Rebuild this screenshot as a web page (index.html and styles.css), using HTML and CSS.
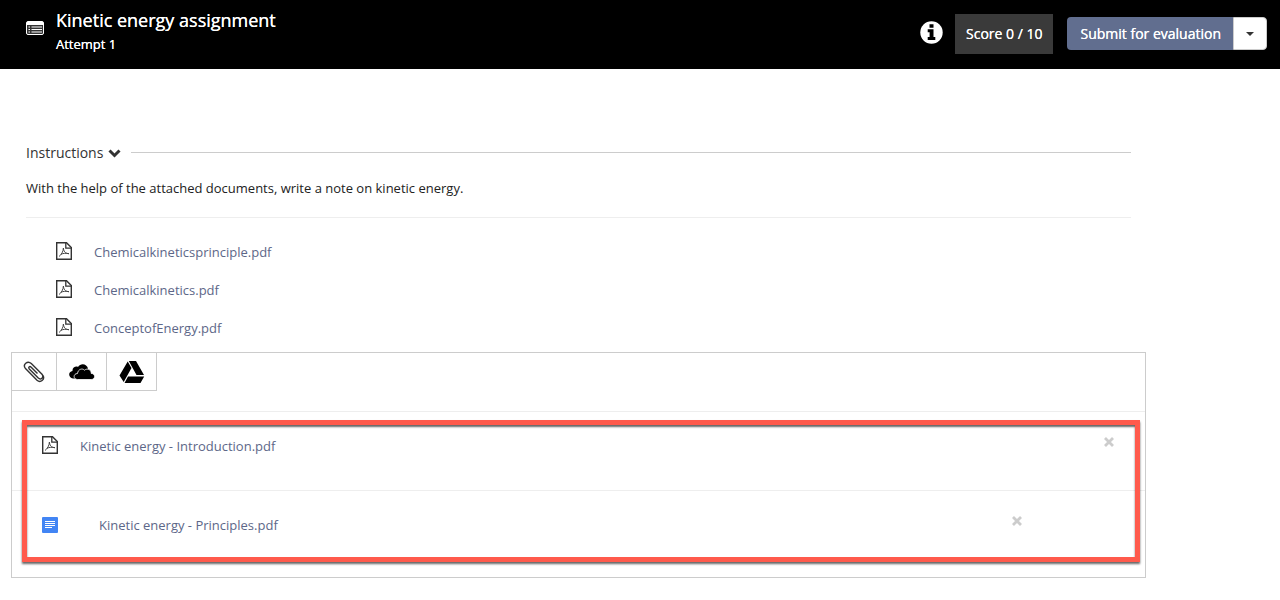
FILE: index.html
```html
<!DOCTYPE html>
<html lang="en">
<head>
    <meta charset="UTF-8">
    <meta name="viewport" content="width=device-width, initial-scale=1">
    <title>Kinetic energy assignment</title>
    <link rel="stylesheet" href="styles.css">
</head>
<body>

    <!-- Shared icon -->
    <svg class="sprite" aria-hidden="true">
        <symbol id="icon-pdf" viewBox="0 0 16 18">
            <path d="M.7.7h9.800l4.800 4.800v11.800H.7z" fill="none" stroke="#333" stroke-width="1.400"/>
            <path d="M9.800.7v5.500h5.500" fill="none" stroke="#333" stroke-width="1.300"/>
            <path d="M3 14.500C5.500 12.500 7.300 9.500 7.400 6c.2 3 1.600 5.500 5.600 5.700M5 12.300c2-1.100 5-1.300 8-.6" fill="none" stroke="#444" stroke-width="1"/>
        </symbol>
    </svg>

    <!-- Top Bar -->
    <header>
        <div class="heading">
            <svg class="list-icon" width="18" height="14" viewBox="0 0 18 14">
                <rect x=".5" y=".5" width="17" height="13" rx="1.500" fill="#333" stroke="#fff"/>
                <path d="M1 1h16v3H1z" fill="#fff"/>
                <path d="M2.500 6h1.500M2.500 8.500h1.500M2.500 11h1.500M5.500 6H16M5.500 8.500H16M5.500 11H16" stroke="#fff" stroke-width="1.200"/>
            </svg>
            <div>
                <h1>Kinetic energy assignment</h1>
                <p class="attempt">Attempt 1</p>
            </div>
        </div>
        <div class="actions">
            <button class="info-btn" aria-label="Information">
                <svg width="23" height="23" viewBox="0 0 23 23">
                    <circle cx="11.500" cy="11.500" r="11.200" fill="#fff"/>
                    <path d="M9.500 3.300h4v3.400h-4zM7.700 8.300h5.800v7.600h1.800v3H7.700v-3h1.900v-4.600H7.700z" fill="#000"/>
                </svg>
            </button>
            <span class="score">Score 0 / 10</span>
            <div class="btn-group">
                <button class="submit-btn">Submit for evaluation</button>
                <button class="caret-btn" aria-label="More options"><span class="caret"></span></button>
            </div>
        </div>
    </header>

    <main>
        <!-- Instructions -->
        <section class="instructions">
            <div class="section-title">
                <button class="toggle-btn">Instructions
                    <svg width="13" height="9" viewBox="0 0 13 9">
                        <path d="M1.500 1.500l5 5 5-5" fill="none" stroke="#333" stroke-width="3"/>
                    </svg>
                </button>
            </div>
            <p class="note">With the help of the attached documents, write a note on kinetic energy.</p>
            <ul class="documents">
                <li><svg class="pdf-icon"><use href="#icon-pdf"/></svg><a href="#">Chemicalkineticsprinciple.pdf</a></li>
                <li><svg class="pdf-icon"><use href="#icon-pdf"/></svg><a href="#">Chemicalkinetics.pdf</a></li>
                <li><svg class="pdf-icon"><use href="#icon-pdf"/></svg><a href="#">ConceptofEnergy.pdf</a></li>
            </ul>
        </section>

        <!-- Attachments -->
        <section class="panel">
            <div class="toolbar">
                <button class="tool clip" aria-label="Attach a file">
                    <svg width="22" height="22" viewBox="0 0 22 22">
                        <path d="M14.500 12.500L8.200 6.200C6.700 4.700 4.800 6.400 6.300 8L15.300 17C17.800 19.300 21.300 16.300 19 13.300L8.300 2.500C4.500-.8-.8 3.500 2.500 7.600L14 19.200C17.500 22.300 22.200 18.500 20 14.500" fill="none" stroke="#333" stroke-width="1.400"/>
                    </svg>
                </button>
                <button class="tool" aria-label="OneDrive">
                    <svg width="26" height="16" viewBox="0 0 26 16">
                        <path d="M4 14.500C-1 14-1 7.500 3.500 7 3 3.500 7 1.700 9 3c2.500-4.500 9-3.500 10 1.500l-2 5-9 5z" fill="#000"/>
                        <path d="M8.500 15.500c-4.500 0-4.500-6 0-6C9 5 13.500 4 15.500 6.200c3-2.500 7-.4 6.700 3.200 4.500.1 4.500 6.100 0 6.100z" fill="#000" stroke="#fff" stroke-width=".8"/>
                    </svg>
                </button>
                <button class="tool" aria-label="Google Drive">
                    <svg width="26" height="22" viewBox="0 0 26 22">
                        <path d="M8.700.5L12.500 7 4.700 21 .5 14.500zM9.800 0h7.200l8 14h-7.500zM9 15.500h16.200L21.500 22H5.500z" fill="#000"/>
                    </svg>
                </button>
            </div>
            <ul class="attachments">
                <li>
                    <svg class="pdf-icon"><use href="#icon-pdf"/></svg>
                    <a href="#">Kinetic energy - Introduction.pdf</a>
                    <button class="remove-btn" aria-label="Remove Introduction">
                        <svg width="10" height="10" viewBox="0 0 10 10"><path d="M1 1l8 8M9 1L1 9" stroke="#ccc" stroke-width="2.800"/></svg>
                    </button>
                </li>
                <li class="drive-file">
                    <svg class="doc-icon" width="16" height="16" viewBox="0 0 16 16">
                        <rect width="16" height="16" rx="1" fill="#4285f4"/>
                        <path d="M3 4.500h10M3 6.500h10M3 8.500h10M3 10.500h7" stroke="#fff"/>
                    </svg>
                    <a href="#">Kinetic energy - Principles.pdf</a>
                    <button class="remove-btn" aria-label="Remove Principles">
                        <svg width="10" height="10" viewBox="0 0 10 10"><path d="M1 1l8 8M9 1L1 9" stroke="#ccc" stroke-width="2.800"/></svg>
                    </button>
                </li>
            </ul>
            <div class="highlight"></div>
        </section>
    </main>

</body>
</html>
```
FILE: styles.css
```css
/* General Styles */
* {
    box-sizing: border-box;
}

body {
    margin: 0;
    font-family: "Open Sans", Arial, sans-serif;
    font-size: 13px;
    line-height: 20px;
    color: #333;
    background: #fff;
}

button {
    font: inherit;
    color: inherit;
    background: none;
    border: none;
    padding: 0;
    cursor: pointer;
}

svg {
    display: block;
    flex: none;
}

ul {
    list-style: none;
    margin: 0;
    padding: 0;
}

a {
    color: #5d6788;
    text-decoration: none;
}

a:hover {
    text-decoration: underline;
}

.sprite {
    position: absolute;
    width: 0;
    height: 0;
}

/* Top Bar */
header {
    display: flex;
    justify-content: space-between;
    align-items: flex-start;
    height: 69px;
    padding: 8px 13px 0 26px;
    background: #000;
    color: #fff;
    text-shadow: 0 0 0 #fff;
}

.heading {
    display: flex;
    gap: 12px;
}

.list-icon {
    margin-top: 13px;
}

h1 {
    margin: 0 0 2px;
    font-size: 18px;
    line-height: 24px;
    font-weight: 500;
}

.attempt {
    margin: 0;
    font-weight: 500;
}

.actions {
    display: flex;
    align-items: center;
    padding-top: 6px;
    font-size: 14px;
    font-weight: 500;
}

.info-btn {
    margin-bottom: 3px;
}

.score {
    margin: 0 14px 0 12px;
    padding: 10px 11px;
    background: #3a3a3a;
}

.btn-group {
    display: flex;
    height: 33px;
    margin-bottom: 1px;
}

.submit-btn {
    padding: 0 12px 0 13px;
    background: #616e8f;
    border-radius: 4px 0 0 4px;
    text-shadow: inherit;
}

.submit-btn:hover {
    background: #525e7d;
}

.caret-btn {
    display: flex;
    align-items: center;
    justify-content: center;
    width: 34px;
    background: #fff;
    border: 1px solid #ccc;
    border-radius: 0 4px 4px 0;
}

.caret {
    border-top: 4px solid #333;
    border-left: 4px solid transparent;
    border-right: 4px solid transparent;
}

/* Instructions */
main {
    padding: 74px 134px 22px 11px;
}

.instructions {
    padding: 0 15px;
}

.section-title {
    display: flex;
    align-items: center;
    gap: 10px;
}

.section-title::after {
    content: "";
    flex: 1;
    margin-bottom: 2px;
    border-top: 1px solid #ccc;
}

.toggle-btn {
    display: flex;
    align-items: center;
    gap: 5px;
    font-size: 14px;
}

.note {
    margin: 0;
    padding: 15px 0 19px;
    color: #222;
    border-bottom: 1px solid #eee;
}

.documents {
    padding: 15px 30px 5px;
}

.documents li {
    display: flex;
    align-items: center;
    gap: 22px;
    height: 38px;
}

.pdf-icon {
    width: 16px;
    height: 18px;
    margin-bottom: 2px;
}

/* Attachments */
.panel {
    position: relative;
    border: 1px solid #ccc;
}

.toolbar {
    display: flex;
}

.tool {
    display: flex;
    align-items: center;
    justify-content: center;
    width: 50px;
    height: 38px;
    border-right: 1px solid #ccc;
    border-bottom: 1px solid #ccc;
}

.clip {
    width: 45px;
}

.attachments {
    padding-top: 20px;
}

.attachments li {
    display: flex;
    align-items: flex-start;
    gap: 22px;
    height: 79px;
    padding: 24px 31px 0 30px;
    border-top: 1px solid #eee;
}

.remove-btn {
    margin-left: auto;
    padding: 1px 0;
}

.attachments .drive-file {
    gap: 41px;
    height: 87px;
    padding-right: 123px;
}

.doc-icon {
    margin-top: 2px;
}

/* Frame drawn over the uploaded files */
.highlight {
    position: absolute;
    top: 67px;
    right: 5px;
    bottom: 15px;
    left: 10px;
    border: 5px solid #ff5a4c;
    box-shadow: 0 2px 2px rgba(0, 0, 0, 0.6), inset 0 2px 2px rgba(0, 0, 0, 0.6);
    pointer-events: none;
}
```
